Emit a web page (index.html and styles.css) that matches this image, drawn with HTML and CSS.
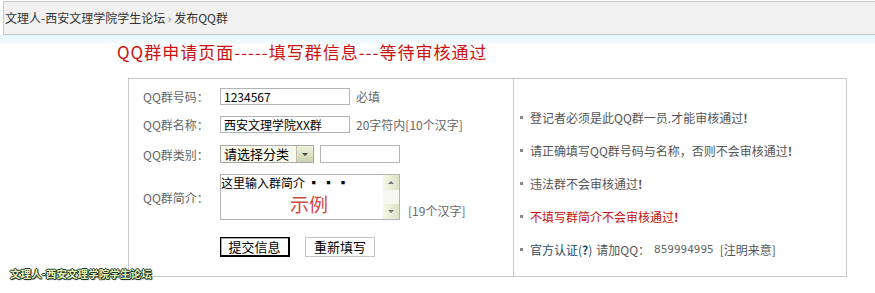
FILE: index.html
```html
<!DOCTYPE html>
<html lang="zh-CN">

<head>
    <meta charset="UTF-8">
    <meta name="viewport" content="width=device-width, initial-scale=1.0">
    <title>发布QQ群</title>
    <link rel="stylesheet" href="styles.css">
</head>

<body>
    <div class="crumb">文理人-西安文理学院学生论坛 <span class="sep">›</span> 发布QQ群</div>
    <div class="sky"></div>

    <h1 class="title">QQ群申请页面-----填写群信息---等待审核通过</h1>

    <div class="box">
        <!-- 左边：表单 -->
        <div class="form">
            <div class="row row-1">
                <label class="label">QQ群号码：</label>
                <div class="input">1234567</div>
                <span class="hint">必填</span>
            </div>
            <div class="row row-2">
                <label class="label">QQ群名称：</label>
                <div class="input">西安文理学院XX群</div>
                <span class="hint">20字符内[10个汉字]</span>
            </div>
            <div class="row row-3">
                <label class="label">QQ群类别：</label>
                <div class="select">
                    <span class="select-text">请选择分类</span>
                    <span class="select-btn"><i class="arrow"></i></span>
                </div>
                <div class="input input-small"></div>
            </div>
            <div class="row row-4">
                <label class="label">QQ群简介：</label>
                <div class="area">
                    <div class="area-text">
                        <div class="first">这里输入群简介 ▪ ▪ ▪</div>
                        <div class="demo">示例</div>
                    </div>
                    <div class="scroll">
                        <span class="scroll-btn"><i class="tri tri-up"></i></span>
                        <span class="scroll-track"></span>
                        <span class="scroll-btn"><i class="tri tri-down"></i></span>
                    </div>
                </div>
                <span class="hint hint-low">[19个汉字]</span>
            </div>
            <div class="buttons">
                <span class="btn btn-main">提交信息</span>
                <span class="btn">重新填写</span>
            </div>
        </div>

        <!-- 右边：说明 -->
        <ul class="notes">
            <li>登记者必须是此QQ群一员.才能审核通过<b>!</b></li>
            <li>请正确填写QQ群号码与名称，否则不会审核通过<b>!</b></li>
            <li>违法群不会审核通过<b>!</b></li>
            <li class="red">不填写群简介不会审核通过<b>!</b></li>
            <li><span class="official">官方认证(<b>?</b>)</span> 请加QQ： <span class="num">859994995</span> [注明来意]</li>
        </ul>
    </div>

    <div class="mark">文理人-西安文理学院学生论坛</div>
</body>

</html>
```

FILE: styles.css
```css
* {
    margin: 0;
    padding: 0;
    box-sizing: border-box;
}

body {
    position: relative;
    width: 875px;
    height: 293px;
    overflow: hidden;
    background-color: #fff;
    font-family: "Noto Sans CJK SC", "DejaVu Sans", sans-serif;
    font-size: 12px;
    color: #555;
}

/* 顶部导航条 */
.crumb {
    height: 34px;
    margin: 1px 0 0 3px;
    padding-left: 1px;
    border: 1px solid #c8c8c8;
    border-right: none;
    background-color: #f1f1f1;
    line-height: 32px;
    font-size: 12px;
    color: #333;
}

.crumb .sep {
    color: #888;
}

.sky {
    height: 9px;
    background: linear-gradient(#e2f6fd, #f6fcfe);
}

.title {
    margin: -2px 0 0 117px;
    height: 20px;
    line-height: 20px;
    font-size: 17px;
    font-weight: normal;
    letter-spacing: 1px;
    color: #cc1111;
}

/* 主框 */
.box {
    display: flex;
    width: 719px;
    height: 199px;
    margin: 16px 0 0 128px;
    border: 1px solid #c8c8c8;
}

.form {
    width: 385px;
    padding: 9px 0 0 14px;
    border-right: 1px solid #c8c8c8;
}

.row {
    display: flex;
    align-items: center;
}

.row-1 {
    height: 17px;
    margin-bottom: 11px;
}

.row-2 {
    height: 17px;
    margin-bottom: 12px;
}

.row-3 {
    height: 18px;
    margin-bottom: 11px;
}

.row-4 {
    height: 46px;
}

.label {
    width: 77px;
    color: #666;
}

.input {
    width: 130px;
    height: 17px;
    padding-left: 3px;
    border: 1px solid #b4b4b4;
    background-color: #fff;
    line-height: 15px;
    color: #000;
}

.input-small {
    width: 80px;
    height: 18px;
    margin-left: 6px;
}

.hint {
    margin-left: 6px;
    color: #666;
}

.hint-low {
    align-self: flex-end;
    margin: 0 0 1px 8px;
}

/* 下拉框 */
.select {
    display: flex;
    height: 18px;
    border: 1px solid #a8a8a8;
}

.select-text {
    width: 76px;
    padding-left: 3px;
    background-color: #f7faea;
    border-right: 1px solid #c0c0b0;
    line-height: 16px;
    font-size: 13px;
    color: #000;
}

.select-btn {
    display: flex;
    width: 16px;
    align-items: center;
    justify-content: center;
    background: linear-gradient(#eef2dc, #c9d2ad);
}

.arrow {
    width: 0;
    height: 0;
    border-left: 3px solid transparent;
    border-right: 3px solid transparent;
    border-top: 3px solid #444;
}

/* 简介文本框 */
.area {
    display: flex;
    width: 180px;
    height: 46px;
    border: 1px solid #b4b4b4;
}

.area-text {
    flex: 1;
    color: #000;
}

.first {
    height: 15px;
    line-height: 15px;
}

.demo {
    height: 20px;
    margin: 4px 0 0 69px;
    font-size: 19px;
    line-height: 20px;
    color: #d04545;
}

.scroll {
    display: flex;
    width: 16px;
    flex-direction: column;
    background-color: #f4f6ec;
}

.scroll-btn {
    display: flex;
    height: 15px;
    align-items: center;
    justify-content: center;
    background: linear-gradient(to right, #f5f7e6, #dfe4c8);
}

.scroll-track {
    flex: 1;
    background-color: #f6f7f0;
}

.tri {
    width: 0;
    height: 0;
    border-left: 3px solid transparent;
    border-right: 3px solid transparent;
}

.tri-up {
    border-bottom: 3px solid #777;
}

.tri-down {
    border-top: 3px solid #777;
}

/* 按钮 */
.buttons {
    display: flex;
    gap: 15px;
    margin: 17px 0 0 77px;
}

.btn {
    width: 70px;
    height: 20px;
    border: 1px solid #c4c4c4;
    background-color: #fff;
    line-height: 18px;
    text-align: center;
    font-size: 13px;
    color: #000;
}

.btn-main {
    border: 1px solid #000;
    border-right-width: 2px;
    border-bottom-width: 2px;
    box-shadow: inset 1px 1px 0 #aaa;
}

/* 右侧说明 */
.notes {
    list-style: none;
    padding: 22px 0 0 6px;
}

.notes li {
    display: flex;
    align-items: center;
    height: 33px;
    color: #555;
}

.notes li::before {
    content: "";
    width: 3px;
    height: 3px;
    margin-right: 7px;
    background-color: #888;
}

.notes b {
    font-weight: bold;
}

.notes .red {
    color: #c41010;
}

.official {
    margin-right: 4px;
    color: #1d4d66;
}

.num {
    margin: 0 6px 0 4px;
    font-family: "DejaVu Sans Mono", monospace;
    font-size: 11px;
    color: #666;
}

/* 左下角浮动标志 */
.mark {
    position: absolute;
    left: 10px;
    top: 266px;
    font-size: 10.5px;
    font-weight: bold;
    letter-spacing: 0.1px;
    color: #e6efb0;
    text-shadow: 1px 0 0 #12332a, -1px 0 0 #12332a, 0 1px 0 #12332a, 0 -1px 0 #12332a, 1px 1px 1px #12332a;
}
```
